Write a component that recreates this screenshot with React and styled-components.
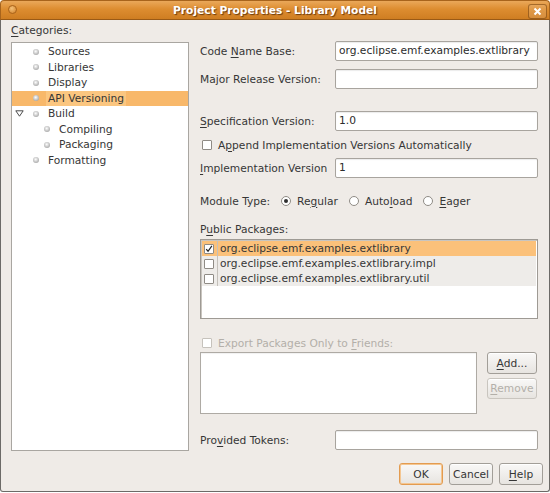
import React from "react";
import styled, { createGlobalStyle, css } from "styled-components";

const GlobalStyle = createGlobalStyle`
  html, body { margin: 0; padding: 0; background: #ffffff; }
  body {
    font-family: "DejaVu Sans", "Liberation Sans", sans-serif;
    font-size: 10.67px;
    color: #363636;
  }
  * { box-sizing: border-box; }
`;

const Window = styled.div`
  width: 550px;
  height: 492px;
  display: flex;
  flex-direction: column;
`;

const TitleBar = styled.div`
  height: 20px;
  flex: none;
  position: relative;
  display: flex;
  align-items: center;
  justify-content: center;
  border-radius: 4px 4px 0 0;
  background: linear-gradient(#eaa85a 0%, #dd8d30 45%, #cf7e22 100%);
  border: 1px solid #a8641c;
  border-bottom: 1px solid #9a5a16;
`;

const Title = styled.span`
  color: #ffffff;
  font-weight: bold;
  font-size: 10.67px;
  text-shadow: 1px 1px 1px rgba(60, 25, 0, 0.7);
`;

const MenuDot = styled.span`
  position: absolute;
  left: 7px;
  top: 4px;
  width: 9px;
  height: 9px;
  border-radius: 50%;
  border: 1px solid #a8621a;
  background: radial-gradient(circle at 40% 35%, #f3c078 0%, #dc9440 70%);
`;

const CloseBtn = styled.span`
  position: absolute;
  right: 2px;
  top: 3px;
  width: 19px;
  height: 15px;
  border-radius: 3px;
  border: 1px solid rgba(110, 55, 0, 0.55);
  background: rgba(255, 255, 255, 0.12);
  display: flex;
  align-items: center;
  justify-content: center;
`;

const Frame = styled.div`
  flex: 1;
  display: flex;
  flex-direction: column;
  background: #efebe7;
  border: 1px solid #6c6a67;
  border-top: none;
  border-radius: 0 0 3px 3px;
`;

const Body = styled.div`
  flex: 1;
  display: flex;
  gap: 11px;
  padding: 0 11px 0 10px;
`;

const LeftCol = styled.div`
  width: 178px;
  display: flex;
  flex-direction: column;
  padding-top: 4px;
`;

const Caption = styled.div`
  line-height: 14px;
  height: 14px;
  margin-top: ${(p) => p.$mt || 0}px;
  color: ${(p) => (p.$disabled ? "#b3afa9" : "inherit")};
`;

const Mn = styled.span`
  text-decoration: underline;
  text-underline-offset: 2px;
  text-decoration-thickness: 1px;
`;

const Tree = styled.div`
  flex: 1;
  margin-top: 4px;
  padding-top: 1px;
  background: #ffffff;
  border: 1px solid #a9a6a1;
`;

const TreeRow = styled.div`
  height: 15.5px;
  display: flex;
  align-items: center;
  padding-left: ${(p) => 3 + (p.$level - 1) * 11}px;
  background: ${(p) => (p.$selected ? "#f8b86a" : "transparent")};
`;

const Expander = styled.span`
  width: 18px;
  flex: none;
  display: flex;
  align-items: center;
`;

const Bullet = styled.span`
  width: 6px;
  height: 6px;
  flex: none;
  border-radius: 50%;
  background: radial-gradient(circle at 45% 40%, #ffffff 0%, #d6d6d6 35%, #8e8e8e 100%);
  margin-right: 7px;
`;

const TreeLabel = styled.span`
  padding: 0 2px;
  line-height: 15px;
  background: ${(p) => (p.$selected ? "#fbc680" : "transparent")};
`;

const RightCol = styled.div`
  flex: 1;
  display: flex;
  flex-direction: column;
  padding-top: 21px;
`;

const FieldRow = styled.div`
  display: flex;
  align-items: center;
  height: 20px;
  margin-top: ${(p) => p.$mt || 0}px;
`;

const FieldLabel = styled.span`
  width: 135px;
  flex: none;
  white-space: nowrap;
`;

const TextBox = styled.div`
  flex: 1;
  height: 20px;
  background: #ffffff;
  border: 1px solid #a8a49e;
  border-radius: 2px;
  box-shadow: inset 0 1px 1px rgba(0, 0, 0, 0.08);
  padding-left: 3px;
  line-height: 18px;
  white-space: nowrap;
  overflow: hidden;
  color: #2c2c2c;
`;

const CheckRow = styled.div`
  display: flex;
  align-items: center;
  height: 14px;
  margin-top: ${(p) => p.$mt || 0}px;
  color: ${(p) => (p.$disabled ? "#b3afa9" : "inherit")};
`;

const Box = styled.span`
  width: 10px;
  height: 10px;
  flex: none;
  background: #ffffff;
  border: 1px solid ${(p) => (p.$disabled ? "#c6c2bc" : "#8f8b85")};
  border-radius: 1px;
  margin-left: ${(p) => p.$ml ?? 2}px;
  margin-right: ${(p) => p.$mr ?? 6}px;
  display: flex;
  align-items: center;
  justify-content: center;
`;

const RadioGroup = styled.div`
  display: flex;
  align-items: center;
  height: 14px;
  margin-top: ${(p) => p.$mt || 0}px;
`;

const GroupLabel = styled.span`
  width: 81px;
  flex: none;
`;

const RadioOption = styled.span`
  display: flex;
  align-items: center;
  margin-right: 11px;
`;

const RadioCircle = styled.span`
  width: 10px;
  height: 10px;
  border-radius: 50%;
  border: 1px solid #8f8b85;
  background: #ffffff;
  margin-right: 6px;
  display: flex;
  align-items: center;
  justify-content: center;
  ${(p) =>
    p.$on &&
    css`
      &::after {
        content: "";
        width: 4px;
        height: 4px;
        border-radius: 50%;
        background: #2f2f2f;
      }
    `}
`;

const PackageList = styled.div`
  margin-top: 2px;
  height: 80px;
  background: #ffffff;
  border: 1px solid #9e9a94;
  box-shadow: inset 1px 1px 0 #c9c5bf;
  padding: 1px 1px 0 1px;
`;

const PackageRow = styled.div`
  height: 15px;
  display: flex;
  align-items: stretch;
  background: ${(p) => (p.$selected ? "#fbc17a" : "#eeece9")};
`;

const CheckCell = styled.span`
  width: 16px;
  flex: none;
  display: flex;
  align-items: center;
  border-right: 1px solid #c4c0ba;
`;

const PackageText = styled.span`
  padding-left: 2px;
  line-height: 15px;
  white-space: nowrap;
`;

const FriendsRow = styled.div`
  display: flex;
  margin-top: 2px;
  height: 62px;
`;

const FriendsArea = styled.div`
  width: 277px;
  height: 62px;
  background: #ffffff;
  border: 1px solid #aeaaa4;
  box-shadow: inset 0 1px 1px rgba(0, 0, 0, 0.06);
`;

const SideButtons = styled.div`
  margin-left: 10px;
  display: flex;
  flex-direction: column;
  gap: 4px;
`;

const Button = styled.button`
  font-family: inherit;
  font-size: 10.67px;
  width: ${(p) => p.$w || 44}px;
  height: ${(p) => p.$h || 22}px;
  padding: 0;
  border-radius: 3px;
  border: 1px solid ${(p) => (p.$focus ? "#e39b50" : p.disabled ? "#c9c5bf" : "#a29e98")};
  background: linear-gradient(#f9f8f7, #e7e4e0);
  color: ${(p) => (p.disabled ? "#b3afa9" : "#363636")};
  box-shadow: ${(p) => (p.$focus ? "inset 0 0 0 1px #f4c691" : "inset 0 1px 0 #ffffff")};
`;

const Footer = styled.div`
  flex: none;
  display: flex;
  justify-content: flex-end;
  gap: 6px;
  padding: 12px 6px 6px 0;
`;

const Triangle = () => (
  <svg width="9" height="7" viewBox="0 0 9 7">
    <polygon points="0.8,0.8 8.2,0.8 4.5,6.2" fill="#ffffff" stroke="#4a4a4a" strokeWidth="1" strokeLinejoin="round" />
  </svg>
);

const Check = () => (
  <svg width="10" height="10" viewBox="0 0 10 10">
    <path d="M1.5 5.2 L3.8 7.8 L8.6 1.2" fill="none" stroke="#222" strokeWidth="1.5" />
  </svg>
);

const treeItems = [
  { label: "Sources", level: 1 },
  { label: "Libraries", level: 1 },
  { label: "Display", level: 1 },
  { label: "API Versioning", level: 1, selected: true },
  { label: "Build", level: 1, expanded: true },
  { label: "Compiling", level: 2 },
  { label: "Packaging", level: 2 },
  { label: "Formatting", level: 1 },
];

const packages = [
  { name: "org.eclipse.emf.examples.extlibrary", checked: true, selected: true },
  { name: "org.eclipse.emf.examples.extlibrary.impl" },
  { name: "org.eclipse.emf.examples.extlibrary.util" },
];

export default function App() {
  return (
    <>
      <GlobalStyle />
      <Window>
        <TitleBar>
          <MenuDot />
          <Title>Project Properties - Library Model</Title>
          <CloseBtn>
            <svg width="9" height="9" viewBox="0 0 9 9">
              <path d="M1.5 1.5 L7.5 7.5 M7.5 1.5 L1.5 7.5" stroke="#ffffff" strokeWidth="2" />
            </svg>
          </CloseBtn>
        </TitleBar>
        <Frame>
          <Body>
            <LeftCol>
              <Caption>
                <Mn>C</Mn>ategories:
              </Caption>
              <Tree>
                {treeItems.map((it) => (
                  <TreeRow key={it.label} $level={it.level} $selected={it.selected}>
                    <Expander>{it.expanded && <Triangle />}</Expander>
                    <Bullet />
                    <TreeLabel $selected={it.selected}>{it.label}</TreeLabel>
                  </TreeRow>
                ))}
              </Tree>
            </LeftCol>
            <RightCol>
              <FieldRow>
                <FieldLabel>
                  Code <Mn>N</Mn>ame Base:
                </FieldLabel>
                <TextBox>org.eclipse.emf.examples.extlibrary</TextBox>
              </FieldRow>
              <FieldRow $mt={8}>
                <FieldLabel>Major Release Version:</FieldLabel>
                <TextBox />
              </FieldRow>
              <FieldRow $mt={22}>
                <FieldLabel>
                  <Mn>S</Mn>pecification Version:
                </FieldLabel>
                <TextBox>1.0</TextBox>
              </FieldRow>
              <CheckRow $mt={7}>
                <Box />
                <span>
                  A<Mn>p</Mn>pend Implementation Versions Automatically
                </span>
              </CheckRow>
              <FieldRow $mt={6}>
                <FieldLabel>
                  <Mn>I</Mn>mplementation Version
                </FieldLabel>
                <TextBox>1</TextBox>
              </FieldRow>
              <RadioGroup $mt={16}>
                <GroupLabel>Module Type:</GroupLabel>
                <RadioOption>
                  <RadioCircle $on />
                  Re<Mn>g</Mn>ular
                </RadioOption>
                <RadioOption>
                  <RadioCircle />
                  Auto<Mn>l</Mn>oad
                </RadioOption>
                <RadioOption>
                  <RadioCircle />
                  <Mn>E</Mn>ager
                </RadioOption>
              </RadioGroup>
              <Caption $mt={15}>
                P<Mn>u</Mn>blic Packages:
              </Caption>
              <PackageList>
                {packages.map((p) => (
                  <PackageRow key={p.name} $selected={p.selected}>
                    <CheckCell>
                      <Box $ml={2} $mr={0}>
                        {p.checked && <Check />}
                      </Box>
                    </CheckCell>
                    <PackageText>{p.name}</PackageText>
                  </PackageRow>
                ))}
              </PackageList>
              <CheckRow $mt={17} $disabled>
                <Box $disabled />
                <span>
                  Export Packages Only to <Mn>F</Mn>riends:
                </span>
              </CheckRow>
              <FriendsRow>
                <FriendsArea />
                <SideButtons>
                  <Button $w={50}>
                    <Mn>A</Mn>dd...
                  </Button>
                  <Button $w={50} $h={21} disabled>
                    <Mn>R</Mn>emove
                  </Button>
                </SideButtons>
              </FriendsRow>
              <FieldRow $mt={16}>
                <FieldLabel>
                  Pro<Mn>v</Mn>ided Tokens:
                </FieldLabel>
                <TextBox />
              </FieldRow>
            </RightCol>
          </Body>
          <Footer>
            <Button $focus>OK</Button>
            <Button>Cancel</Button>
            <Button>
              <Mn>H</Mn>elp
            </Button>
          </Footer>
        </Frame>
      </Window>
    </>
  );
}
